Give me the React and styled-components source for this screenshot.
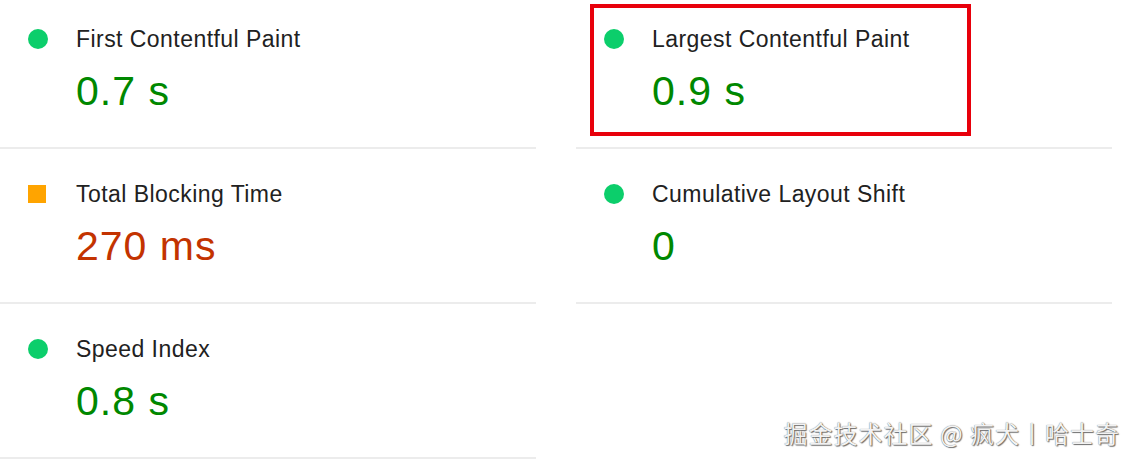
import React from "react";
import styled, { createGlobalStyle } from "styled-components";

const GlobalStyle = createGlobalStyle`
  html, body {
    margin: 0;
    padding: 0;
    background: #ffffff;
  }
  body {
    width: 1136px;
    height: 462px;
    overflow: hidden;
    position: relative;
    font-family: "Liberation Sans", Arial, Helvetica, sans-serif;
  }
`;

const metrics = [
  { title: "First Contentful Paint", value: "0.7 s", rating: "pass" },
  { title: "Largest Contentful Paint", value: "0.9 s", rating: "pass", marked: true },
  { title: "Total Blocking Time", value: "270 ms", rating: "average" },
  { title: "Cumulative Layout Shift", value: "0", rating: "pass" },
  { title: "Speed Index", value: "0.8 s", rating: "pass" },
];

const valueColors = {
  pass: "#008800",
  average: "#c33300",
};

const Grid = styled.div`
  display: grid;
  grid-template-columns: 536px 536px;
  column-gap: 40px;
  margin-top: -6px;
`;

const Metric = styled.div`
  position: relative;
  box-sizing: border-box;
  height: 155px;
  padding: 32px 0 0 28px;
  border-bottom: 2px solid #ececec;
`;

const Header = styled.div`
  display: flex;
  align-items: center;
`;

const IconSlot = styled.div`
  width: 48px;
  flex: none;
  display: flex;
  align-items: center;
`;

const Indicator = styled.span`
  display: block;
  width: ${(p) => (p.$rating === "average" ? "18px" : "20px")};
  height: ${(p) => (p.$rating === "average" ? "18px" : "20px")};
  border-radius: ${(p) => (p.$rating === "average" ? "0" : "50%")};
  background: ${(p) => (p.$rating === "average" ? "#ffa400" : "#0cce6b")};
`;

const Title = styled.div`
  font-size: 23px;
  line-height: 26px;
  letter-spacing: 0.45px;
  color: #212121;
`;

const Value = styled.div`
  margin: 16px 0 0 48px;
  font-size: 41px;
  line-height: 46px;
  letter-spacing: 1px;
  color: ${(p) => valueColors[p.$rating]};
`;

const Highlight = styled.div`
  position: absolute;
  left: 14px;
  top: 10px;
  width: 381px;
  height: 132px;
  box-sizing: border-box;
  border: 4px solid #e8000b;
  pointer-events: none;
`;

const Watermark = styled.div`
  position: absolute;
  right: 16px;
  bottom: 14px;
  font-family: "Noto Sans CJK SC", "Liberation Sans", sans-serif;
  font-size: 24px;
  line-height: 30px;
  letter-spacing: 1px;
  color: #f2f2f2;
  text-shadow: 1px 1px 1px rgba(0, 0, 0, 0.55), 0 0 1px rgba(0, 0, 0, 0.6);
  white-space: nowrap;
`;

export default function App() {
  return (
    <>
      <GlobalStyle />
      <Grid>
        {metrics.map((m) => (
          <Metric key={m.title}>
            {m.marked && <Highlight />}
            <Header>
              <IconSlot>
                <Indicator $rating={m.rating} />
              </IconSlot>
              <Title>{m.title}</Title>
            </Header>
            <Value $rating={m.rating}>{m.value}</Value>
          </Metric>
        ))}
      </Grid>
      <Watermark>掘金技术社区 @ 疯犬丨哈士奇</Watermark>
    </>
  );
}
